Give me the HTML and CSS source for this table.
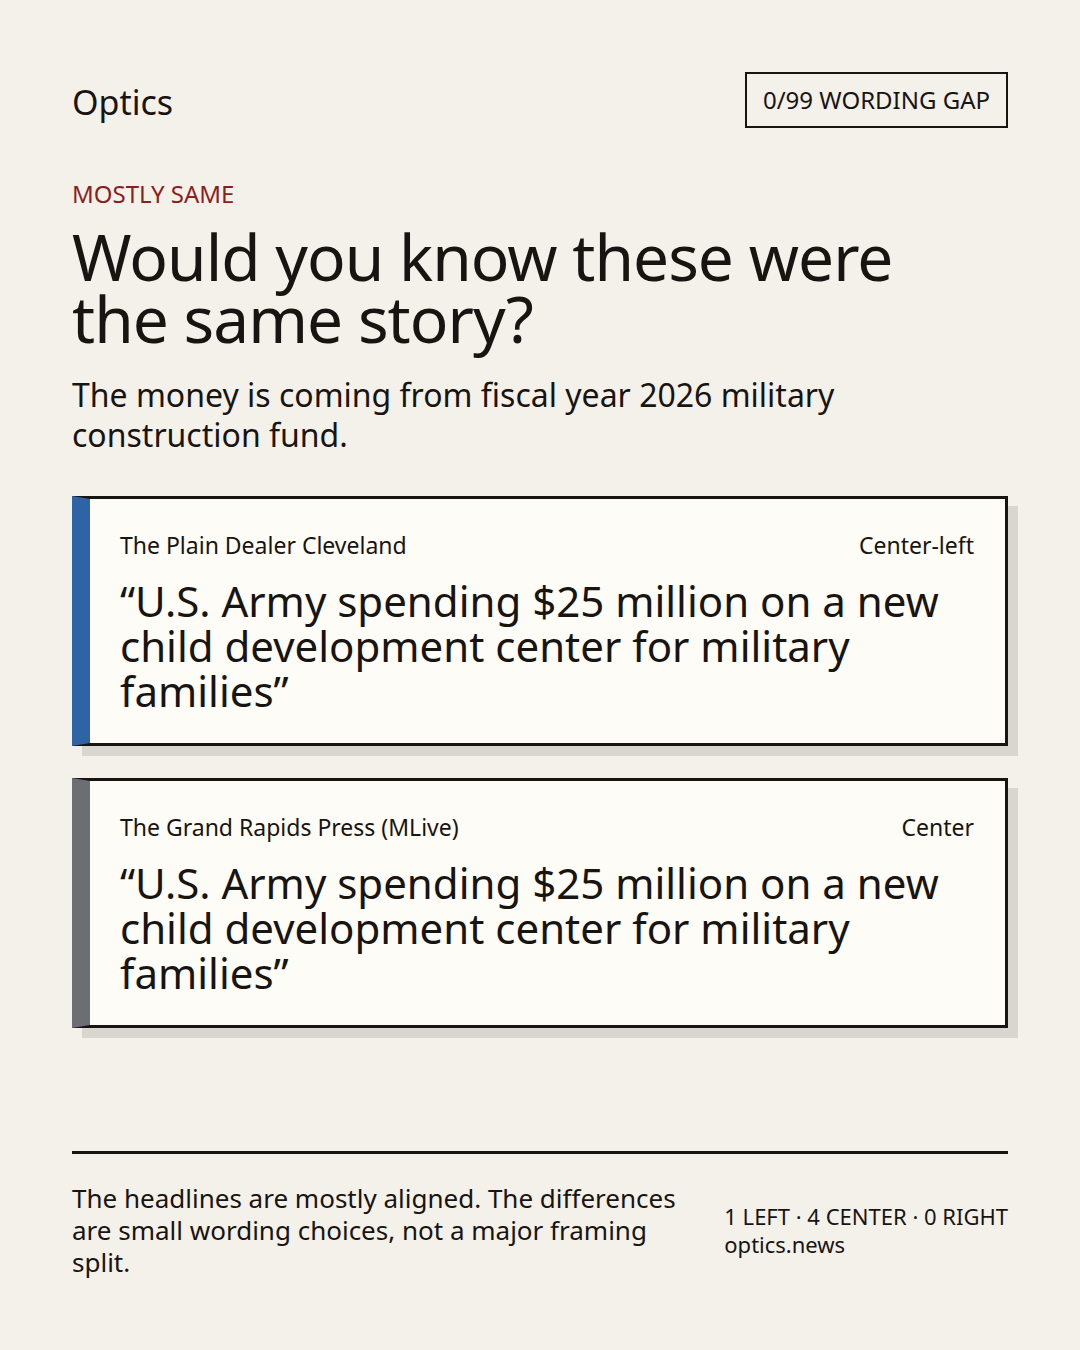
FILE: index.html
```html
<!DOCTYPE html>
<html lang="en">
<head>
<meta charset="utf-8">
<title>Optics</title>
<link rel="stylesheet" href="styles.css">
</head>
<body>
<main class="page">
  <header class="topbar">
    <div class="brand">Optics</div>
    <div class="badge">0/99 WORDING GAP</div>
  </header>

  <p class="kicker">MOSTLY SAME</p>
  <h1 class="title">Would you know these were the same story?</h1>
  <p class="dek">The money is coming from fiscal year 2026 military construction fund.</p>

  <section class="cards">
    <article class="card card-left">
      <div class="card-meta">
        <span class="source">The Plain Dealer Cleveland</span>
        <span class="lean">Center-left</span>
      </div>
      <p class="quote">“U.S. Army spending $25 million on a new child development center for military families”</p>
    </article>
    <article class="card card-center">
      <div class="card-meta">
        <span class="source">The Grand Rapids Press (MLive)</span>
        <span class="lean">Center</span>
      </div>
      <p class="quote">“U.S. Army spending $25 million on a new child development center for military families”</p>
    </article>
  </section>

  <footer class="footer">
    <p class="summary">The headlines are mostly aligned. The differences are small wording choices, not a major framing split.</p>
    <div class="stats">
      <div>1 LEFT · 4 CENTER · 0 RIGHT</div>
      <div>optics.news</div>
    </div>
  </footer>
</main>
</body>
</html>
```

FILE: styles.css
```css
* { box-sizing: border-box; }

html, body {
  margin: 0;
  padding: 0;
  background: #f4f0ea;
}

body {
  font-family: "Noto Sans", "Open Sans", sans-serif;
  color: #171411;
}

.page {
  width: 1080px;
  height: 1350px;
  padding: 72px;
  display: flex;
  flex-direction: column;
}

.topbar {
  display: flex;
  justify-content: space-between;
  align-items: center;
  height: 56px;
}

.brand {
  font-size: 34px;
  line-height: 44px;
  margin-top: 4px;
}

.badge {
  height: 56px;
  border: 2px solid #171411;
  padding: 0 16px;
  font-size: 24px;
  line-height: 52px;
}

.kicker {
  margin: 50px 0 0;
  font-size: 24px;
  line-height: 32px;
  color: #8a1f1f;
}

.title {
  margin: 16px 0 0;
  font-size: 64px;
  font-weight: 400;
  line-height: 62px;
  letter-spacing: -0.015em;
  max-width: 880px;
}

.dek {
  margin: 25px 0 0;
  font-size: 32px;
  line-height: 40px;
  max-width: 870px;
}

.cards {
  margin-top: 41px;
  display: flex;
  flex-direction: column;
  gap: 32px;
}

.card {
  background: #fdfcf7;
  border: 3px solid #171411;
  border-left: 18px solid #2e63a6;
  box-shadow: 10px 10px 0 #d9d6cf;
  padding: 30px 31px 30px 30px;
}

.card-left { border-left-color: #2e63a6; }
.card-center { border-left-color: #6b6e73; }

.card-meta {
  display: flex;
  justify-content: space-between;
  font-size: 23px;
  line-height: 32px;
}

.quote {
  margin: 17px 0 0;
  font-size: 42px;
  line-height: 45px;
}

.footer {
  margin-top: auto;
  border-top: 3px solid #171411;
  padding-top: 28px;
  display: flex;
  align-items: center;
  gap: 44px;
}

.summary {
  flex: 1;
  margin: 0;
  font-size: 26px;
  line-height: 32px;
}

.stats {
  font-size: 22px;
  line-height: 28px;
  white-space: nowrap;
}
```
